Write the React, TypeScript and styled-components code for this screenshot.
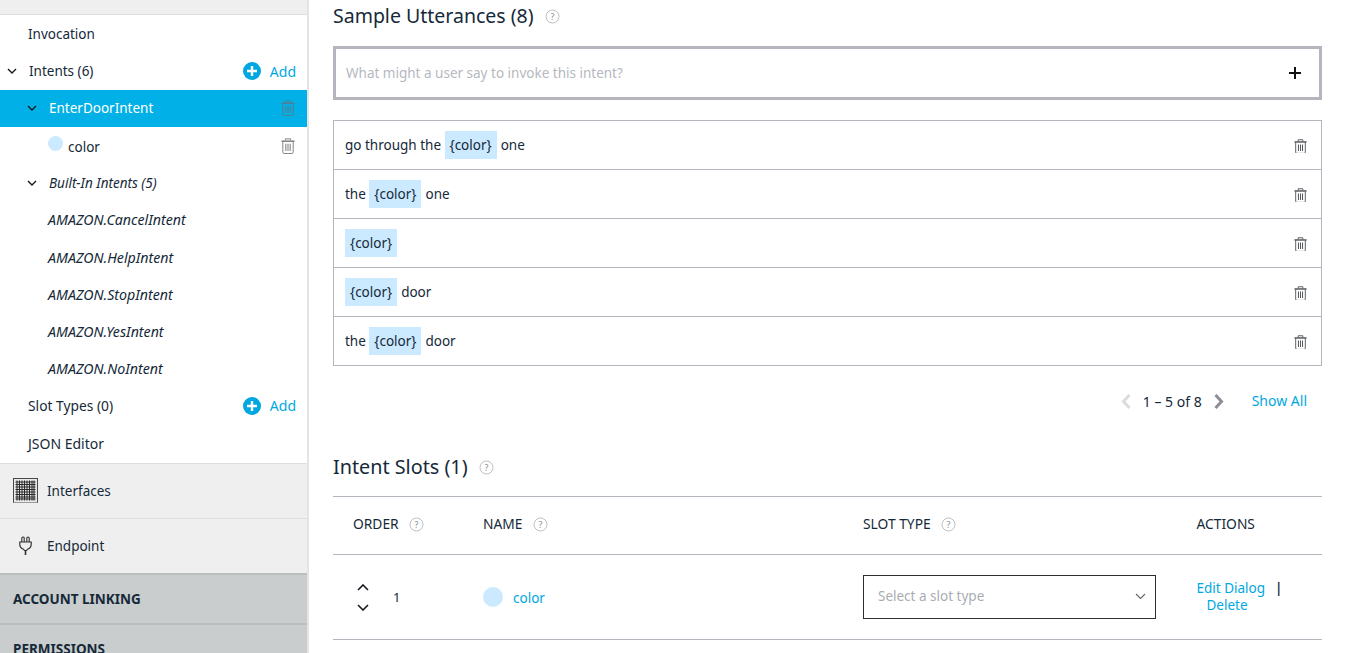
import React from 'react';
import styled, { createGlobalStyle } from 'styled-components';

const GlobalStyle = createGlobalStyle`
  html, body {
    margin: 0;
    padding: 0;
    height: 653px;
    overflow: hidden;
    background: #fff;
  }
  body {
    font-family: "Noto Sans", "Liberation Sans", sans-serif;
    font-size: 14px;
    color: #152939;
  }
`;

const Page = styled.div`
  display: flex;
  width: 1348px;
  height: 653px;
  overflow: hidden;
`;

const Sidebar = styled.aside`
  flex: 0 0 309px;
  box-sizing: border-box;
  height: 653px;
  overflow: hidden;
  border-right: 2px solid #e4e4e4;
`;

const TopStrip = styled.div`
  height: 14px;
  background: #efefef;
  border-bottom: 1px solid #dedede;
`;

const Tree = styled.div`
  padding-top: 0.4px;
  padding-bottom: 1.2px;
`;

const TreeRow = styled.div<{ $indent: number; $active?: boolean; $italic?: boolean; $size?: number }>`
  display: flex;
  align-items: center;
  height: 37.2px;
  box-sizing: border-box;
  padding-left: ${(p) => p.$indent}px;
  padding-right: 11px;
  background: ${(p) => (p.$active ? '#00b0e6' : 'transparent')};
  color: ${(p) => (p.$active ? '#fff' : '#152939')};
  font-style: ${(p) => (p.$italic ? 'italic' : 'normal')};
  font-size: ${(p) => p.$size ?? 13.5}px;
`;

const Caret = styled.svg<{ $gap: number }>`
  width: 10px;
  height: 6px;
  margin-right: ${(p) => p.$gap}px;
  flex: none;
`;

const Spacer = styled.div`
  flex: 1;
`;

const AddLink = styled.span`
  color: #00a8e1;
  font-size: 14px;
  margin-left: 9px;
`;

const SlotDot = styled.span<{ $size: number }>`
  display: inline-block;
  flex: none;
  width: ${(p) => p.$size}px;
  height: ${(p) => p.$size}px;
  border-radius: 50%;
  background: #cceaff;
`;

const TreeDot = styled(SlotDot)`
  margin-top: -4px;
`;

const ColorLabel = styled.span`
  margin-left: 5px;
  position: relative;
  top: 1px;
`;

const TreeTrash = styled.div`
  display: flex;
  margin-right: 1px;
`;

const SideSection = styled.div`
  display: flex;
  align-items: center;
  height: 55px;
  box-sizing: border-box;
  padding-left: 13px;
  background: #efefef;
  border-top: 1px solid #dedede;
  font-size: 13.5px;
`;

const SideIconBox = styled.div`
  width: 34px;
  flex: none;
  display: flex;
`;

const PlugBox = styled(SideIconBox)`
  padding-left: 6px;
  box-sizing: border-box;
`;

const SideHeader = styled.div`
  display: flex;
  align-items: center;
  height: 50px;
  box-sizing: border-box;
  padding-left: 13px;
  background: #cacdcd;
  border-top: 2px solid #bbbebe;
  font-weight: 700;
  font-size: 13.5px;
`;

const Main = styled.main`
  flex: 1;
  box-sizing: border-box;
  padding: 0 26px 0 24px;
  min-width: 0;
`;

const Heading = styled.h2<{ $top: number; $size: number }>`
  display: flex;
  align-items: center;
  gap: 11px;
  margin: ${(p) => p.$top}px 0 0;
  height: 28px;
  font-size: ${(p) => p.$size}px;
  font-weight: 400;
  white-space: nowrap;
`;

const UtteranceInput = styled.div`
  display: flex;
  align-items: center;
  justify-content: space-between;
  box-sizing: border-box;
  height: 54px;
  margin-top: 17px;
  padding: 0 18px 0 10px;
  border: 3px solid #b5b5bd;
  color: #b5b9c0;
  font-size: 13.5px;
`;

const UtteranceList = styled.div`
  margin-top: 20px;
  border: 1px solid #b5b5bd;
  border-bottom: none;
`;

const UtteranceRow = styled.div`
  display: flex;
  align-items: center;
  height: 49px;
  box-sizing: border-box;
  padding: 0 14px 0 11px;
  border-bottom: 1px solid #b5b5bd;
  font-size: 13.5px;
  white-space: pre;
`;

const SlotChip = styled.span<{ $lead: boolean }>`
  display: inline-flex;
  align-items: center;
  height: 28px;
  padding: 0 5px;
  margin: 0 4px 0 ${(p) => (p.$lead ? 3.5 : 0)}px;
  background: #cceaff;
`;

const RowTrash = styled.div`
  display: flex;
  padding-top: 2px;
`;

const Pager = styled.div`
  display: flex;
  align-items: center;
  justify-content: flex-end;
  height: 24px;
  margin-top: 23px;
  padding-right: 15px;
  font-size: 14px;
`;

const PagerCount = styled.span`
  margin: 0 12px 0 12px;
`;

const ShowAll = styled.a`
  color: #00a8e1;
  margin-left: 28px;
  position: relative;
  top: -1px;
`;

const SlotTable = styled.div`
  margin-top: 16px;
  border-top: 1px solid #b5b5bd;
`;

const Grid = styled.div`
  display: grid;
  grid-template-columns: 150px 380px 333.5px 1fr;
  align-items: center;
  box-sizing: border-box;
  border-bottom: 1px solid #b5b5bd;
`;

const HeadRow = styled(Grid)`
  height: 58px;
  font-size: 13.8px;
`;

const BodyRow = styled(Grid)`
  height: 85px;
`;

const HeadCell = styled.div<{ $pad: number }>`
  display: flex;
  align-items: center;
  gap: 10px;
  padding-left: ${(p) => p.$pad}px;
  padding-bottom: 4px;
`;

const OrderCell = styled.div`
  display: flex;
  align-items: center;
  padding-left: 24px;
  font-size: 13px;
`;

const Arrows = styled.div`
  display: flex;
  flex-direction: column;
  gap: 13px;
  margin-right: 24px;
`;

const NameCell = styled.div`
  display: flex;
  align-items: center;
  gap: 10px;
  color: #00a8e1;
  font-size: 13.5px;
`;

const NameText = styled.span`
  padding-top: 2px;
`;

const SelectBox = styled.div`
  display: flex;
  align-items: center;
  justify-content: space-between;
  box-sizing: border-box;
  width: 293px;
  height: 44px;
  padding: 0 9px 2px 14px;
  border: 1px solid #2a2f33;
  color: #a9adb2;
  font-size: 13.5px;
`;

const ActionsCell = styled.div`
  font-size: 13.5px;
  line-height: 17px;
  color: #00a8e1;
`;

const ActionLine = styled.div`
  display: flex;
  align-items: center;
`;

const Pipe = styled.span`
  color: #152939;
  margin-left: 10px;
  font-weight: 600;
`;

const DeleteLink = styled.div`
  padding-left: 10px;
`;

const HelpWrap = styled.svg`
  width: 15px;
  height: 15px;
  flex: none;
  position: relative;
  top: 1px;
`;

const Help = () => (
  <HelpWrap viewBox="0 0 15 15">
    <circle cx="7.5" cy="7.5" r="6.5" fill="none" stroke="#bfc1c4" strokeWidth="1" />
    <text x="7.5" y="10.6" textAnchor="middle" fontSize="9" fill="#8a8d91" fontFamily="Noto Sans, sans-serif">?</text>
  </HelpWrap>
);

const Trash = ({ color = '#6d7176', size = 14 }: { color?: string; size?: number }) => (
  <svg width={size} height={(size * 16) / 14} viewBox="0 0 14 16" fill="none">
    <path d="M0.500 3.200h13" stroke={color} strokeWidth="1.600" />
    <path d="M4.500 2.600V0.800h5v1.800" stroke={color} strokeWidth="1" />
    <path d="M1.800 3.500v10.800c0 .7.500 1.200 1.200 1.200h8c.7 0 1.200-.5 1.200-1.200V3.500" stroke={color} strokeWidth="1" />
    <path d="M4.800 5.800v7.200M7 5.800v7.200M9.200 5.800v7.200" stroke={color} strokeWidth="1.100" />
  </svg>
);

const Down = ({ gap }: { gap: number }) => (
  <Caret $gap={gap} viewBox="0 0 10 6" fill="none">
    <path d="M1 1l4 4 4-4" stroke="#16191f" strokeWidth="1.400" />
  </Caret>
);

const AddCircle = () => (
  <svg width="18" height="18" viewBox="0 0 18 18">
    <circle cx="9" cy="9" r="9" fill="#00a8e1" />
    <path d="M9 4v10M4 9h10" stroke="#fff" strokeWidth="2.400" />
  </svg>
);

const gridLines = [4, 6.5, 9, 11.5, 14, 16.5, 19, 21];

const InterfacesIcon = () => (
  <svg width="25" height="25" viewBox="0 0 25 25" fill="none">
    <rect x="0.500" y="0.500" width="24" height="24" fill="#e8e8e8" stroke="#4a4a4a" />
    <path d="M0.500 24.500h24" stroke="#9a9a9a" />
    {gridLines.map((v) => (
      <path key={v} d={`M${v} 2.500v20M2.500 ${v}h20`} stroke="#2b2b2b" strokeWidth="1" />
    ))}
  </svg>
);

const PlugIcon = () => (
  <svg width="13" height="19" viewBox="0 0 13 19" fill="none">
    <path d="M2.800 6V2c0-1.300 2.400-1.300 2.400 0v4M7.800 6V2c0-1.300 2.400-1.300 2.400 0v4" stroke="#333" strokeWidth="1.100" />
    <path d="M0.800 6h11.400v2.200c0 2.800-1.900 4.400-3.700 5L7.500 14.500h-2l-1-1.300C2.700 12.600 0.800 11 0.800 8.200z" stroke="#333" strokeWidth="1.200" />
    <path d="M6.500 14.500V19" stroke="#333" strokeWidth="1.600" />
  </svg>
);

const Chevron = ({ dir, color }: { dir: 'left' | 'right'; color: string }) => (
  <svg width="10" height="15" viewBox="0 0 10 15" fill="none">
    <path d={dir === 'left' ? 'M8.500 1L2.500 7.500 8.500 14' : 'M1.500 1L7.500 7.500 1.500 14'} stroke={color} strokeWidth="3" />
  </svg>
);

const Arrow = ({ up }: { up?: boolean }) => (
  <svg width="12" height="7" viewBox="0 0 12 7" fill="none">
    <path d={up ? 'M1 6l5-5 5 5' : 'M1 1l5 5 5-5'} stroke="#16191f" strokeWidth="1.600" />
  </svg>
);

const builtIns = ['AMAZON.CancelIntent', 'AMAZON.HelpIntent', 'AMAZON.StopIntent', 'AMAZON.YesIntent', 'AMAZON.NoIntent'];

const utterances = [
  ['go through the', 'one'],
  ['the', 'one'],
  ['', ''],
  ['', 'door'],
  ['the', 'door'],
];

export default function App() {
  return (
    <Page>
      <GlobalStyle />
      <Sidebar>
        <TopStrip />
        <Tree>
          <TreeRow $indent={28}>Invocation</TreeRow>
          <TreeRow $indent={7}>
            <Down gap={12} />
            Intents (6)
            <Spacer />
            <AddCircle />
            <AddLink>Add</AddLink>
          </TreeRow>
          <TreeRow $indent={27} $active>
            <Down gap={12} />
            EnterDoorIntent
            <Spacer />
            <TreeTrash>
              <Trash color="#4f7f96" />
            </TreeTrash>
          </TreeRow>
          <TreeRow $indent={48}>
            <TreeDot $size={15} />
            <ColorLabel>color</ColorLabel>
            <Spacer />
            <TreeTrash>
              <Trash color="#85888c" />
            </TreeTrash>
          </TreeRow>
          <TreeRow $indent={27} $italic>
            <Down gap={12} />
            Built-In Intents (5)
          </TreeRow>
          {builtIns.map((name) => (
            <TreeRow key={name} $indent={48} $italic $size={14.2}>
              {name}
            </TreeRow>
          ))}
          <TreeRow $indent={28} $size={13.8}>
            Slot Types (0)
            <Spacer />
            <AddCircle />
            <AddLink>Add</AddLink>
          </TreeRow>
          <TreeRow $indent={28} $size={14}>JSON Editor</TreeRow>
        </Tree>
        <SideSection>
          <SideIconBox>
            <InterfacesIcon />
          </SideIconBox>
          Interfaces
        </SideSection>
        <SideSection>
          <PlugBox>
            <PlugIcon />
          </PlugBox>
          Endpoint
        </SideSection>
        <SideHeader>ACCOUNT LINKING</SideHeader>
        <SideHeader>PERMISSIONS</SideHeader>
      </Sidebar>
      <Main>
        <Heading $top={1} $size={19.5}>
          Sample Utterances (8)
          <Help />
        </Heading>
        <UtteranceInput>
          What might a user say to invoke this intent?
          <svg width="12" height="12" viewBox="0 0 12 12">
            <path d="M6 0v12M0 6h12" stroke="#111" strokeWidth="2" />
          </svg>
        </UtteranceInput>
        <UtteranceList>
          {utterances.map(([before, after], i) => (
            <UtteranceRow key={i}>
              {before}
              <SlotChip $lead={before !== ''}>{'{color}'}</SlotChip>
              {after}
              <Spacer />
              <RowTrash>
                <Trash color="#55585c" size={13} />
              </RowTrash>
            </UtteranceRow>
          ))}
        </UtteranceList>
        <Pager>
          <Chevron dir="left" color="#dcdcdc" />
          <PagerCount>1 – 5 of 8</PagerCount>
          <Chevron dir="right" color="#8d8d95" />
          <ShowAll>Show All</ShowAll>
        </Pager>
        <Heading $top={39} $size={19.8}>
          Intent Slots (1)
          <Help />
        </Heading>
        <SlotTable>
          <HeadRow>
            <HeadCell $pad={20}>
              ORDER
              <Help />
            </HeadCell>
            <HeadCell $pad={0}>
              NAME
              <Help />
            </HeadCell>
            <HeadCell $pad={0}>
              SLOT TYPE
              <Help />
            </HeadCell>
            <HeadCell $pad={0}>ACTIONS</HeadCell>
          </HeadRow>
          <BodyRow>
            <OrderCell>
              <Arrows>
                <Arrow up />
                <Arrow />
              </Arrows>
              1
            </OrderCell>
            <NameCell>
              <SlotDot $size={20} />
              <NameText>color</NameText>
            </NameCell>
            <SelectBox>
              Select a slot type
              <svg width="11" height="7" viewBox="0 0 11 7" fill="none">
                <path d="M1 1l4.500 4.500L10 1" stroke="#666" strokeWidth="1.100" />
              </svg>
            </SelectBox>
            <ActionsCell>
              <ActionLine>
                Edit Dialog
                <Pipe>|</Pipe>
              </ActionLine>
              <DeleteLink>Delete</DeleteLink>
            </ActionsCell>
          </BodyRow>
        </SlotTable>
      </Main>
    </Page>
  );
}
